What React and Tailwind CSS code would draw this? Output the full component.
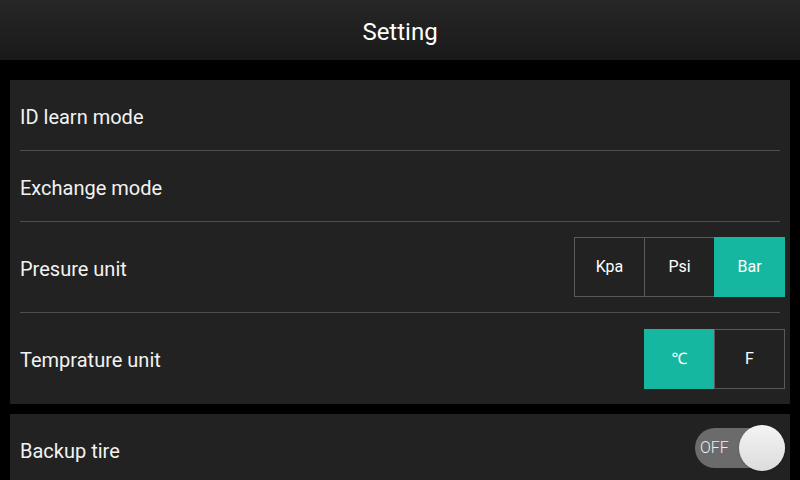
import React, { useState } from 'react';

const font = { fontFamily: 'Roboto, "Noto Sans", sans-serif' };

const Segmented = ({ options, value, onChange }) => (
  <div className="flex">
    {options.map((opt, i) => (
      <button
        key={opt}
        onClick={() => onChange(opt)}
        className={`w-[71px] h-[60px] flex items-center justify-center text-[16px] text-white border ${
          value === opt ? 'bg-[#16b7a0] border-[#16b7a0]' : 'bg-[#222222] border-[#5a5a5a]'
        } ${i > 0 ? '-ml-px' : ''}`}
      >
        {opt}
      </button>
    ))}
  </div>
);

const Row = ({ label, children, tall, last }) => (
  <div className={`flex flex-col ${tall ? 'h-[91px]' : 'h-[71px]'}`}>
    <div className="flex-1 flex items-center justify-between pl-[10px] pr-[5px]">
      <span className="text-[20px] text-[#f2f2f2] pt-[3px]">{label}</span>
      {children}
    </div>
    {!last && <div className="mx-[10px] h-px bg-[#4e4e4e]" />}
  </div>
);

export default function App() {
  const [pressure, setPressure] = useState('Bar');
  const [temp, setTemp] = useState('℃');
  const [backup, setBackup] = useState(false);

  return (
    <div className="w-[800px] h-[480px] bg-black overflow-hidden" style={font}>
      {/* Header */}
      <div className="h-[60px] bg-gradient-to-b from-[#272727] to-[#191919] flex items-center justify-center">
        <h1 className="text-[24px] text-white pt-[3px]">Setting</h1>
      </div>

      <div className="px-[10px] pt-[20px]">
        <div className="bg-[#222222]">
          <Row label="ID learn mode" />
          <Row label="Exchange mode" />
          <Row label="Presure unit" tall>
            <Segmented options={['Kpa', 'Psi', 'Bar']} value={pressure} onChange={setPressure} />
          </Row>
          <Row label="Temprature unit" tall last>
            <Segmented options={['℃', 'F']} value={temp} onChange={setTemp} />
          </Row>
        </div>

        <div className="mt-[10px] bg-[#222222] h-[80px] flex items-start justify-between pl-[10px] pr-[5px] pt-[14px]">
          <span className="text-[20px] text-[#f2f2f2] mt-[8px]">Backup tire</span>
          <button
            onClick={() => setBackup(!backup)}
            className="relative w-[90px] h-[40px] rounded-full bg-[#6b6b6b] flex items-center"
          >
            <span className="ml-[5px] text-[16px] font-light text-[#eeeeee]">{backup ? 'ON' : 'OFF'}</span>
            <span className="absolute right-0 top-[-3px] w-[46px] h-[46px] rounded-full bg-gradient-to-b from-[#f4f4f4] to-[#dcdcdc] shadow" />
          </button>
        </div>
      </div>
    </div>
  );
}
